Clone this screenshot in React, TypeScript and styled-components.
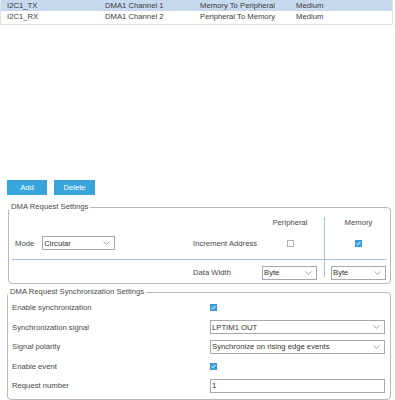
import React from "react";
import styled, { createGlobalStyle } from "styled-components";

const Global = createGlobalStyle`
  html, body { margin: 0; padding: 0; background: #fff; }
  body { font-family: "Liberation Sans", Arial, sans-serif; font-size: 7.7px; color: #444; }
  * { box-sizing: border-box; }
`;

const Page = styled.div`
  width: 395px;
  height: 400px;
  display: flex;
  flex-direction: column;
  overflow: hidden;
`;

const Table = styled.div`
  width: 393px;
  height: 25px;
  border: 1px solid #e2e2e2;
  border-top: none;
  display: flex;
  flex-direction: column;
`;

const Row = styled.div<{ $selected?: boolean }>`
  display: grid;
  grid-template-columns: 98px 95px 96px 1fr;
  height: 11px;
  align-items: center;
  padding-left: 6px;
  background: ${(p) => (p.$selected ? "#c7d9ef" : "#fff")};
  color: #3a3a3a;
  line-height: 11px;
  white-space: nowrap;
`;

const ButtonBar = styled.div`
  display: flex;
  gap: 7px;
  margin: 155px 0 0 7px;
`;

const Button = styled.button<{ $w: number }>`
  width: ${(p) => p.$w}px;
  height: 15px;
  border: none;
  padding: 0;
  background: #38a6dc;
  color: #fff;
  font-family: "Liberation Sans", Arial, sans-serif;
  font-size: 7.7px;
`;

const Fieldset = styled.fieldset<{ $left: number; $top: number }>`
  margin: ${(p) => p.$top}px 4px 0 ${(p) => p.$left}px;
  border: 1px solid #b9b9b9;
  border-radius: 4px;
  padding: 0;
  min-width: 0;
`;

const Legend = styled.legend`
  padding: 0 2px;
  margin-left: 0;
  font-size: 7.7px;
  line-height: 10px;
  color: #484848;
`;

const DmaGrid = styled.div`
  display: grid;
  grid-template-columns: 181px 69px 62px 62px;
  grid-template-rows: 14px 28px 5px 21px;
  padding: 3px 4px 0 3px;
`;

const Cell = styled.div<{ $col: number; $row: number; $center?: boolean; $pad?: string }>`
  grid-column: ${(p) => p.$col};
  grid-row: ${(p) => p.$row};
  display: flex;
  align-items: center;
  justify-content: ${(p) => (p.$center ? "center" : "flex-start")};
  padding: ${(p) => p.$pad || "0"};
  white-space: nowrap;
  color: #484848;
`;

const VLine = styled.div`
  grid-column: 4;
  grid-row: 1 / 5;
  margin: 2px 0 6px 0;
  border-left: 1px solid #a8bde0;
  pointer-events: none;
`;

const HLine = styled.div`
  grid-column: 1 / 5;
  grid-row: 3;
  align-self: center;
  height: 1px;
  background: #a8bde0;
`;

const SelectBox = styled.div<{ $w?: number }>`
  width: ${(p) => (p.$w ? `${p.$w}px` : "100%")};
  height: 14px;
  border: 1px solid #a9a9a9;
  background: #fff;
  display: flex;
  align-items: center;
  justify-content: space-between;
  padding: 0 4px 0 1px;
  color: #333;
`;

const Chevron = () => (
  <svg width="7" height="4" viewBox="0 0 7 4">
    <path d="M0.5 0.5 L3.5 3.3 L6.5 0.5" fill="none" stroke="#8a8a8a" strokeWidth="0.8" />
  </svg>
);

const Select = ({ value, w }: { value: string; w?: number }) => (
  <SelectBox $w={w}>
    <span>{value}</span>
    <Chevron />
  </SelectBox>
);

const Box = styled.span<{ $checked?: boolean }>`
  width: 7px;
  height: 7px;
  display: inline-flex;
  align-items: center;
  justify-content: center;
  border: 1px solid ${(p) => (p.$checked ? "#3a9ad8" : "#b0b0b0")};
  background: ${(p) => (p.$checked ? "#3da5e0" : "#fff")};
`;

const Check = ({ checked }: { checked?: boolean }) => (
  <Box $checked={checked}>
    {checked && (
      <svg width="5" height="5" viewBox="0 0 5 5">
        <path d="M0.8 2.6 L2 3.8 L4.3 1" fill="none" stroke="#fff" strokeWidth="0.9" />
      </svg>
    )}
  </Box>
);

const ModeLabel = styled.span`
  margin-right: 8px;
`;

const SyncGrid = styled.div`
  display: grid;
  grid-template-columns: 193px 1fr;
  grid-auto-rows: 19.5px;
  padding: 1px 5px 3px 4px;
  align-items: center;
`;

const Label = styled.div`
  color: #484848;
  white-space: nowrap;
`;

const Control = styled.div`
  display: flex;
  align-items: center;
  padding-left: 5px;
`;

const Input = styled.div`
  width: 100%;
  height: 14px;
  border: 1px solid #a9a9a9;
  background: #fff;
  display: flex;
  align-items: center;
  padding-left: 1px;
  color: #333;
`;

const rows = [
  ["I2C1_TX", "DMA1 Channel 1", "Memory To Peripheral", "Medium"],
  ["I2C1_RX", "DMA1 Channel 2", "Peripheral To Memory", "Medium"],
];

export default function App() {
  return (
    <Page>
      <Global />
      <Table>
        {rows.map((r, i) => (
          <Row key={i} $selected={i === 0}>
            {r.map((c) => (
              <span key={c}>{c}</span>
            ))}
          </Row>
        ))}
      </Table>
      <ButtonBar>
        <Button $w={40}>Add</Button>
        <Button $w={41}>Delete</Button>
      </ButtonBar>
      <Fieldset $left={8} $top={7}>
        <Legend>DMA Request Settings</Legend>
        <DmaGrid>
          <Cell $col={3} $row={1} $center $pad="0 6px 0 0">Peripheral</Cell>
          <Cell $col={4} $row={1} $center $pad="0 0 0 7px">Memory</Cell>
          <Cell $col={1} $row={2} $pad="0 0 0 3px">
            <ModeLabel>Mode</ModeLabel>
            <Select value="Circular" w={73} />
          </Cell>
          <Cell $col={2} $row={2}>Increment Address</Cell>
          <Cell $col={3} $row={2} $center $pad="0 6px 0 0">
            <Check />
          </Cell>
          <Cell $col={4} $row={2} $center $pad="0 0 0 7px">
            <Check checked />
          </Cell>
          <HLine />
          <Cell $col={2} $row={4}>Data Width</Cell>
          <Cell $col={3} $row={4} $pad="0 7px 0 0">
            <Select value="Byte" />
          </Cell>
          <Cell $col={4} $row={4} $pad="0 0 0 7px">
            <Select value="Byte" />
          </Cell>
          <VLine />
        </DmaGrid>
      </Fieldset>
      <Fieldset $left={7} $top={3}>
        <Legend>DMA Request Synchronization Settings</Legend>
        <SyncGrid>
          <Label>Enable synchronization</Label>
          <Control>
            <Check checked />
          </Control>
          <Label>Synchronization signal</Label>
          <Control>
            <Select value="LPTIM1 OUT" />
          </Control>
          <Label>Signal polarity</Label>
          <Control>
            <Select value="Synchronize on rising edge events" />
          </Control>
          <Label>Enable event</Label>
          <Control>
            <Check checked />
          </Control>
          <Label>Request number</Label>
          <Control>
            <Input>1</Input>
          </Control>
        </SyncGrid>
      </Fieldset>
    </Page>
  );
}
